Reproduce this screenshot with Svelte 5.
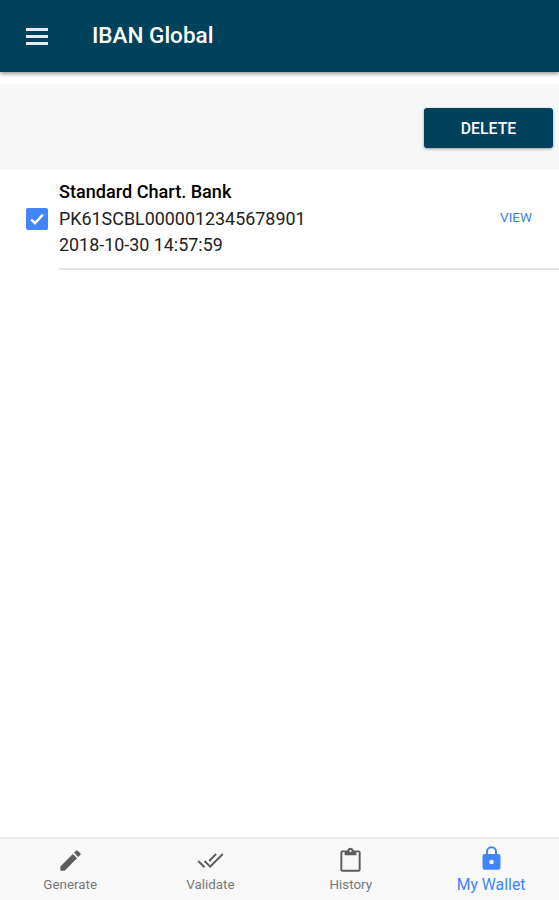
<script lang="ts">
  let selected = $state('wallet');
  let accounts = $state([
    { bank: 'Standard Chart. Bank', iban: 'PK61SCBL0000012345678901', date: '2018-10-30 14:57:59', checked: true },
  ]);

  const tabs = [
    { id: 'generate', label: 'Generate', icon: 'M3 17.25V21h3.75L17.81 9.94l-3.75-3.75L3 17.25zM20.71 7.04a1 1 0 0 0 0-1.41l-2.34-2.34a1 1 0 0 0-1.41 0l-1.83 1.83 3.75 3.75 1.83-1.83z' },
    { id: 'validate', label: 'Validate', icon: 'M17.6 6.8l-1.2-1.2-6.2 6.2 1.2 1.2 6.2-6.2zM22.3 5.6L11.7 16.2 7.3 11.8 6.1 13l5.6 5.6L23.5 6.8l-1.2-1.2zM.5 13L6.1 18.6l1.2-1.2L1.7 11.8.5 13z' },
    { id: 'history', label: 'History', icon: 'M19.2 3H15A3.1 3.1 0 0 0 9 3H4.8A1.8 1.8 0 0 0 3 4.8v15.4A1.8 1.8 0 0 0 4.8 22h14.4a1.8 1.8 0 0 0 1.8-1.8V4.8A1.8 1.8 0 0 0 19.2 3zM12 2.6a1 1 0 1 1 0 2 1 1 0 0 1 0-2zm7.3 17.7H4.7V4.7h2.1v2.7h10.4V4.7h2.1v15.6z' },
    { id: 'wallet', label: 'My Wallet', icon: 'M18 8h-1.1V6A4.9 4.9 0 0 0 7.1 6v2H6a2 2 0 0 0-2 2v10a2 2 0 0 0 2 2h12a2 2 0 0 0 2-2V10a2 2 0 0 0-2-2zm-6 9a2 2 0 1 1 0-4 2 2 0 0 1 0 4zm3.1-9H8.9V6a3.1 3.1 0 0 1 6.2 0v2z' },
  ];

  function removeChecked() {
    accounts = accounts.filter((a) => !a.checked);
  }
</script>

<div class="app">
  <header class="header">
    <button class="menu" aria-label="Menu">
      <span class="bar"></span>
      <span class="bar"></span>
      <span class="bar"></span>
    </button>
    <h1 class="title">IBAN Global</h1>
  </header>

  <main class="content">
    <div class="actions">
      <button class="delete" onclick={removeChecked}>DELETE</button>
    </div>

    {#each accounts as account}
      <div class="item">
        <button
          class="checkbox"
          class:checked={account.checked}
          aria-label="Select"
          onclick={() => { account.checked = !account.checked; }}
        >
          {#if account.checked}
            <svg viewBox="0 0 22 22" width="22" height="22"><path d="M5.2 11.5l3.7 3.7 8-8.6" /></svg>
          {/if}
        </button>
        <div class="inner">
          <div class="details">
            <strong class="bank">{account.bank}</strong>
            <span class="iban">{account.iban}</span>
            <span class="date">{account.date}</span>
          </div>
          <button class="view">VIEW</button>
        </div>
      </div>
    {/each}
  </main>

  <nav class="tabs">
    {#each tabs as tab}
      <button class="tab" class:active={selected === tab.id} onclick={() => { selected = tab.id; }}>
        <svg class="icon" viewBox="0 0 24 24"><path d={tab.icon} /></svg>
        <span class="label">{tab.label}</span>
      </button>
    {/each}
  </nav>
</div>

<style>
  :global(body) {
    margin: 0;
    background: #fff;
  }

  .app {
    display: flex;
    flex-direction: column;
    height: 100vh;
    overflow: hidden;
    font-family: Roboto, sans-serif;
    color: #111;
  }

  button {
    border: none;
    background: none;
    padding: 0;
    font-family: inherit;
    cursor: pointer;
  }

  .header {
    display: flex;
    align-items: center;
    height: 72px;
    flex: none;
    background: #00415b;
    box-shadow: 0 2px 4px rgba(0, 0, 0, 0.4);
  }

  .menu {
    display: flex;
    flex-direction: column;
    gap: 4px;
    margin-left: 26px;
    margin-top: 1px;
  }

  .bar {
    display: block;
    width: 22px;
    height: 3px;
    background: #e6e8f2;
  }

  .title {
    margin: 0 0 2px 44px;
    font-size: 22.5px;
    font-weight: 500;
    line-height: 30px;
    color: #fff;
  }

  .content {
    flex: 1;
    padding-top: 12px;
  }

  .actions {
    display: flex;
    justify-content: flex-end;
    align-items: center;
    height: 86px;
    padding-right: 6px;
    background: #f7f7f7;
  }

  .delete {
    width: 129px;
    height: 40px;
    margin-top: 2px;
    border-radius: 3px;
    background: #00415b;
    color: #fff;
    font-size: 15.8px;
    font-weight: 500;
    box-shadow: 0 1px 3px rgba(0, 0, 0, 0.4);
  }

  .item {
    display: flex;
    align-items: center;
    padding-left: 26px;
  }

  .checkbox {
    box-sizing: border-box;
    width: 22px;
    height: 22px;
    margin-bottom: 2px;
    border: 2px solid #777;
    border-radius: 2px;
  }

  .checkbox.checked {
    border: none;
    background: #4285f8;
  }

  .checkbox svg {
    display: block;
    fill: none;
    stroke: #fff;
    stroke-width: 2.4;
  }

  .inner {
    flex: 1;
    display: flex;
    align-items: center;
    justify-content: space-between;
    box-sizing: border-box;
    height: 100px;
    margin-left: 11px;
    border-bottom: 2px solid #e4e4e4;
  }

  .details {
    display: flex;
    flex-direction: column;
    font-size: 17.9px;
    line-height: 26.5px;
    color: #222;
  }

  .bank {
    font-weight: 500;
    font-size: 18.1px;
    color: #000;
  }

  .view {
    margin: 0 27px 5px 0;
    font-size: 13.5px;
    color: #3880f4;
  }

  .tabs {
    display: flex;
    box-sizing: border-box;
    height: 63px;
    flex: none;
    border-top: 2px solid #ebebeb;
    background: #f8f8f8;
  }

  .tab {
    flex: none;
    width: 140.3px;
    display: flex;
    flex-direction: column;
    align-items: center;
    padding-top: 8px;
    color: #777;
    font-size: 13.4px;
  }

  .icon {
    width: 27px;
    height: 27px;
    fill: #5c5c5c;
  }

  .label {
    line-height: 18px;
    margin-top: 2px;
  }

  .tab.active {
    padding-top: 6px;
    color: #4285f8;
    font-size: 15.8px;
  }

  .tab.active .icon {
    fill: #4285f8;
  }

  .tab.active .label {
    margin-top: 4px;
  }
</style>
